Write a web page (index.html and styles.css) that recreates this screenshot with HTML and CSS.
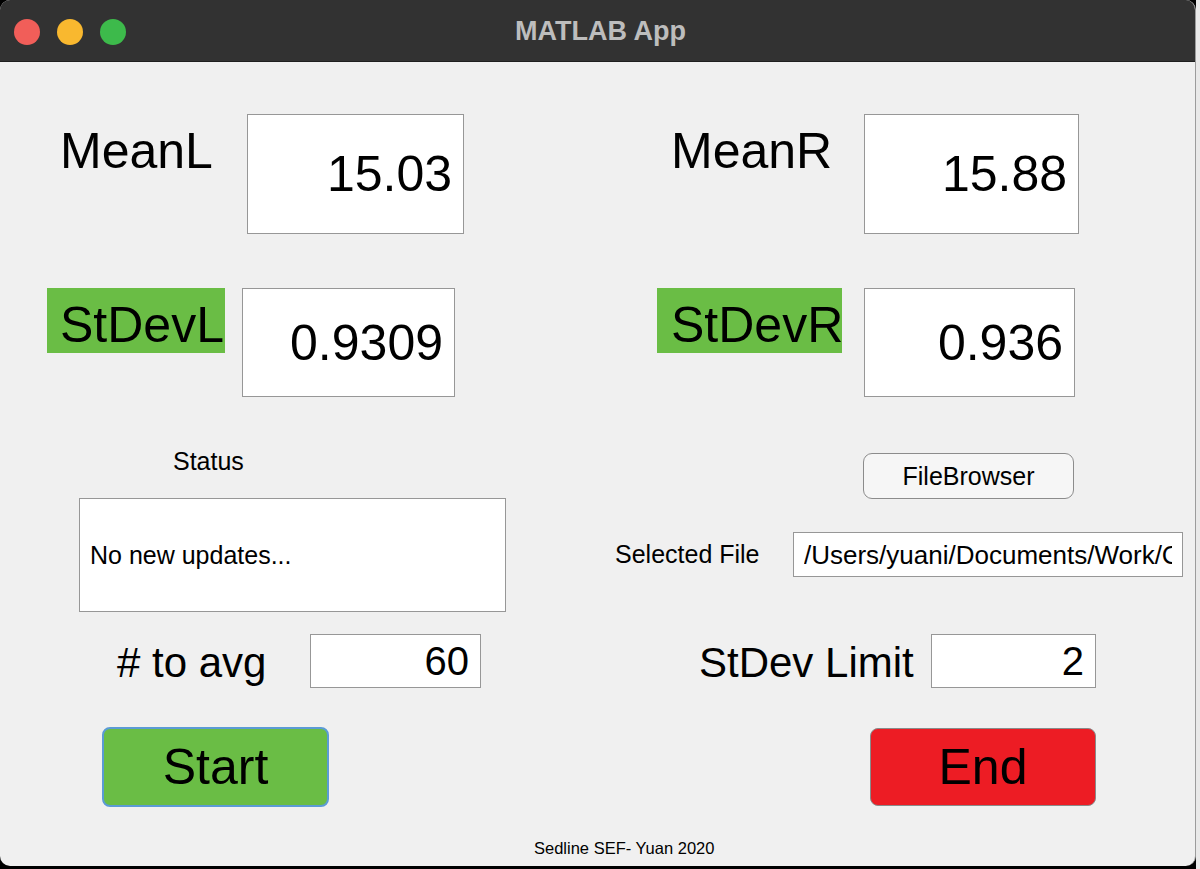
FILE: index.html
```html
<!DOCTYPE html>
<html lang="en">
<head>
<meta charset="utf-8">
<title>MATLAB App</title>
<link rel="stylesheet" href="styles.css">
</head>
<body>
<div class="window">
  <header class="titlebar">
    <div class="lights">
      <span class="light red"></span>
      <span class="light yellow"></span>
      <span class="light green"></span>
    </div>
    <div class="title">MATLAB App</div>
    <div></div>
  </header>

  <main class="content">
    <section class="col col-left">
      <div class="row row-mean mean-l">
        <span class="big-label label-mean-l">MeanL</span>
        <div class="field field-mean-l">15.03</div>
      </div>
      <div class="row row-sd sd-l">
        <span class="green-label green-l">StDevL</span>
        <div class="field field-sd-l">0.9309</div>
      </div>
      <div class="small-label status-label">Status</div>
      <div class="status-box">No new updates...</div>
      <div class="row row-num avg-row">
        <span class="mid-label avg-label"># to avg</span>
        <div class="num-field avg-field">60</div>
      </div>
      <button class="btn btn-start">Start</button>
    </section>

    <section class="col col-right">
      <div class="row row-mean mean-r">
        <span class="big-label label-mean-r">MeanR</span>
        <div class="field field-mean-r">15.88</div>
      </div>
      <div class="row row-sd sd-r">
        <span class="green-label green-r">StDevR</span>
        <div class="field field-sd-r">0.936</div>
      </div>
      <button class="file-btn">FileBrowser</button>
      <div class="row file-row">
        <span class="small-label file-label">Selected File</span>
        <div class="path-box"><span class="path-text">/Users/yuani/Documents/Work/Code/SedlineSEF/data.csv</span></div>
      </div>
      <div class="row row-num limit-row">
        <span class="mid-label limit-label">StDev Limit</span>
        <div class="num-field limit-field">2</div>
      </div>
      <button class="btn btn-end">End</button>
    </section>
  </main>

  <footer class="footer">Sedline SEF- Yuan 2020</footer>
</div>
</body>
</html>
```

FILE: styles.css
```css
html, body {
  margin: 0;
  padding: 0;
}

body {
  width: 1200px;
  height: 869px;
  overflow: hidden;
  background: linear-gradient(to right, #000 1196px, #e9e9e9 1196px);
  font-family: "Liberation Sans", Arial, Helvetica, sans-serif;
  color: #000;
}

.window {
  width: 1196px;
  height: 866px;
  box-sizing: border-box;
  background: #f0f0f0;
  border-radius: 10px;
  border-right: 1px solid #9c9c9c;
  overflow: hidden;
}

/* Title bar */
.titlebar {
  height: 62px;
  box-sizing: border-box;
  background: #323232;
  border-bottom: 1px solid #1f1f1f;
  display: grid;
  grid-template-columns: 1fr auto 1fr;
  align-items: center;
}

.lights {
  display: flex;
  gap: 17px;
  padding-left: 14px;
  margin-top: 1px;
}

.light {
  width: 26px;
  height: 26px;
  border-radius: 50%;
  display: block;
}

.light.red { background: #f15e59; }
.light.yellow { background: #f9b82f; }
.light.green { background: #3dba4b; }

.title {
  font-weight: bold;
  font-size: 27px;
  color: #bdbdbd;
  line-height: 62px;
  margin-left: 6px;
}

/* Content */
.content {
  display: flex;
  padding-top: 52px;
}

.col {
  display: flex;
  flex-direction: column;
  align-items: flex-start;
}

.col-left { width: 600px; }
.col-right { width: 595px; }

.row {
  display: flex;
  align-items: flex-start;
}

.field,
.num-field,
.status-box,
.path-box {
  background: #fff;
  border: 1px solid #979797;
  box-sizing: border-box;
}

.field {
  display: flex;
  align-items: center;
  justify-content: flex-end;
  padding-right: 11px;
  font-size: 50px;
  line-height: 1;
}

.big-label {
  font-size: 50px;
  line-height: 50px;
  margin-top: 12px;
}

/* Row 1 */
.mean-l { margin-left: 60px; }
.label-mean-l { width: 187px; }
.field-mean-l { width: 217px; height: 120px; }

.mean-r { margin-left: 71px; }
.label-mean-r { width: 193px; }
.field-mean-r { width: 215px; height: 120px; }

/* Row 2 */
.row-sd { margin-top: 54px; }

.green-label {
  background: #6abd45;
  height: 65px;
  box-sizing: border-box;
  padding-top: 10px;
  padding-left: 13px;
  font-size: 50px;
  line-height: 55px;
  overflow: hidden;
  white-space: nowrap;
}

.sd-l { margin-left: 47px; }
.green-l { width: 178px; margin-right: 17px; }
.field-sd-l { width: 213px; height: 109px; }

.sd-r { margin-left: 57px; }
.green-r { width: 185px; padding-left: 14px; margin-right: 22px; }
.field-sd-r { width: 211px; height: 109px; }

/* Small labels */
.small-label {
  font-size: 25px;
  line-height: 25px;
}

.status-label {
  margin-top: 52px;
  margin-left: 173px;
}

.status-box {
  margin-top: 24px;
  margin-left: 79px;
  width: 427px;
  height: 114px;
  display: flex;
  align-items: center;
  padding-left: 10px;
  font-size: 25px;
  line-height: 25px;
}

/* Number rows */
.row-num { margin-top: 22px; }

.mid-label {
  font-size: 42px;
  line-height: 42px;
  margin-top: 8px;
  white-space: nowrap;
}

.num-field {
  height: 54px;
  display: flex;
  align-items: center;
  justify-content: flex-end;
  padding-right: 11px;
  font-size: 40px;
  line-height: 1;
}

.avg-row { margin-left: 117px; }
.avg-label { width: 193px; }
.avg-field { width: 171px; }

.limit-row { margin-top: 57px; margin-left: 99px; }
.limit-label { width: 232px; }
.limit-field { width: 165px; }

/* Buttons */
.btn {
  font-family: inherit;
  font-size: 50px;
  line-height: 1;
  color: #000;
  border-radius: 8px;
  box-sizing: border-box;
  padding: 0;
  display: flex;
  align-items: center;
  justify-content: center;
}

.btn-start {
  margin-top: 39px;
  margin-left: 102px;
  width: 227px;
  height: 80px;
  background: #6abd45;
  border: 2px solid #5b9bd5;
}

.btn-end {
  margin-top: 40px;
  margin-left: 270px;
  width: 226px;
  height: 78px;
  background: #ed1c24;
  border: 1px solid #8a8a8a;
}

.file-btn {
  margin-top: 56px;
  margin-left: 263px;
  width: 211px;
  height: 46px;
  box-sizing: border-box;
  border: 1px solid #8c8c8c;
  border-radius: 9px;
  background: #f6f6f6;
  font-family: inherit;
  font-size: 25px;
  line-height: 1;
  color: #000;
  padding: 0;
}

/* Selected file */
.file-row {
  margin-top: 33px;
  margin-left: 15px;
  align-items: center;
}

.file-label { width: 178px; }

.path-box {
  width: 390px;
  height: 45px;
  padding: 0 10px;
  display: flex;
  align-items: center;
}

.path-text {
  display: block;
  width: 100%;
  overflow: hidden;
  white-space: nowrap;
  font-size: 26px;
  line-height: 30px;
}

/* Footer */
.footer {
  margin-top: 33px;
  padding-left: 534px;
  font-size: 16.5px;
  line-height: 17px;
}
```
